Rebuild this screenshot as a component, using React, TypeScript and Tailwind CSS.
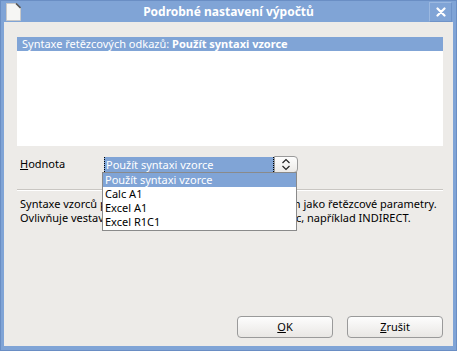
import React from "react";

const font = { fontFamily: '"Noto Sans", "Open Sans", sans-serif' };

export default function App() {
  return (
    <div
      className="w-[457px] h-[351px] flex flex-col bg-[#80a4d6] border border-[#6a8ec4] text-[11px] text-black overflow-hidden"
      style={font}
    >
      {/* Title bar */}
      <div className="h-[21px] flex items-center relative shrink-0">
        <svg className="absolute left-[4px] top-[2px]" width="16" height="18" viewBox="0 0 16 18">
          <path d="M1.5 0.5 H11 L15.5 5 V17.5 H1.5 Z" fill="#f6f6f4" stroke="#c9c9c9" />
          <path d="M11 0.5 L15.5 5" stroke="#555" strokeWidth="1.6" />
        </svg>
        <div className="flex-1 text-center text-white font-bold text-[12px] leading-none pt-[1px]">
          Podrobné nastavení výpočtů
        </div>
        <div className="absolute right-[4px] top-[1px] w-[23px] h-[20px] border border-[#9bb8e0] border-b-[#6f93c8] border-r-[#6f93c8] flex items-center justify-center">
          <svg width="10" height="10" viewBox="0 0 10 10">
            <path d="M1.5 1.5 L8.5 8.5 M8.5 1.5 L1.5 8.5" stroke="#ffffff" strokeWidth="2.2" strokeLinecap="round" />
          </svg>
        </div>
      </div>

      {/* Content */}
      <div className="flex-1 mx-[3px] mb-[4px] bg-[#edebe8] flex flex-col relative">
        {/* List box */}
        <div className="mt-[15px] ml-[13px] mr-[10px] h-[109px] bg-white">
          <div className="h-[14px] bg-[#80a4d6] text-white leading-[14px] pl-[5px] whitespace-nowrap">
            Syntaxe řetězcových odkazů: <span className="font-bold">Použít syntaxi vzorce</span>
          </div>
        </div>

        {/* Hodnota row */}
        <div className="mt-[10px] flex items-center h-[17px] relative">
          <div className="ml-[16px] w-[82px]">
            <span className="underline">H</span>odnota
          </div>
          <div className="w-[196px] h-[17px] flex">
            <div className="flex-1 flex items-center pl-[2px]">
              <div className="flex-1 h-[15px] bg-[#80a4d6] text-white leading-[15px] pl-[1px] border-x border-dotted border-black whitespace-nowrap">
                Použít syntaxi vzorce
              </div>
            </div>
            <div className="w-[24px] h-[17px] rounded-r-[4px] border border-[#9a9a9a] bg-gradient-to-b from-[#fdfdfd] to-[#eceae7] flex items-center justify-center">
              <svg width="10" height="13" viewBox="0 0 10 13">
                <path d="M1.5 5 L5 1.5 L8.5 5 M1.5 8 L5 11.5 L8.5 8" fill="none" stroke="#222" strokeWidth="1.2" />
              </svg>
            </div>
          </div>

          {/* Dropdown menu */}
          <div className="absolute left-[98px] top-[16px] w-[195px] bg-white border border-[#8a8a8a] z-10 pb-[1px]">
            <div className="h-[14px] leading-[14px] bg-[#80a4d6] text-white pl-[2px]">Použít syntaxi vzorce</div>
            <div className="h-[14px] leading-[14px] pl-[2px]">Calc A1</div>
            <div className="h-[14px] leading-[14px] pl-[2px]">Excel A1</div>
            <div className="h-[14px] leading-[14px] pl-[2px]">Excel R1C1</div>
          </div>
        </div>

        {/* Separator */}
        <div className="mt-[16px] ml-[13px] mr-[10px] h-[2px] border-t border-[#c9c6c2] border-b-white border-b" />

        {/* Description */}
        <div className="mt-[6px] ml-[16px] mr-[12px] leading-[14px]">
          <div className="whitespace-nowrap">Syntaxe vzorců použitá při parsování odkazů zadaných jako řetězcové parametry.</div>
          <div className="whitespace-nowrap">Ovlivňuje vestavěné funkce, jež mají vstup jako řetězec, například INDIRECT.</div>
        </div>

        <div className="flex-1" />

        {/* Buttons */}
        <div className="flex justify-end gap-[14px] mr-[10px] mb-[8px]">
          <button className="w-[96px] h-[22px] rounded-[4px] border border-[#9a9a9a] bg-gradient-to-b from-[#fdfdfd] to-[#e9e7e4] text-[11px]" style={font}>
            <span className="underline">O</span>K
          </button>
          <button className="w-[96px] h-[22px] rounded-[4px] border border-[#9a9a9a] bg-gradient-to-b from-[#fdfdfd] to-[#e9e7e4] text-[11px]" style={font}>
            <span className="underline">Z</span>rušit
          </button>
        </div>
      </div>
    </div>
  );
}
